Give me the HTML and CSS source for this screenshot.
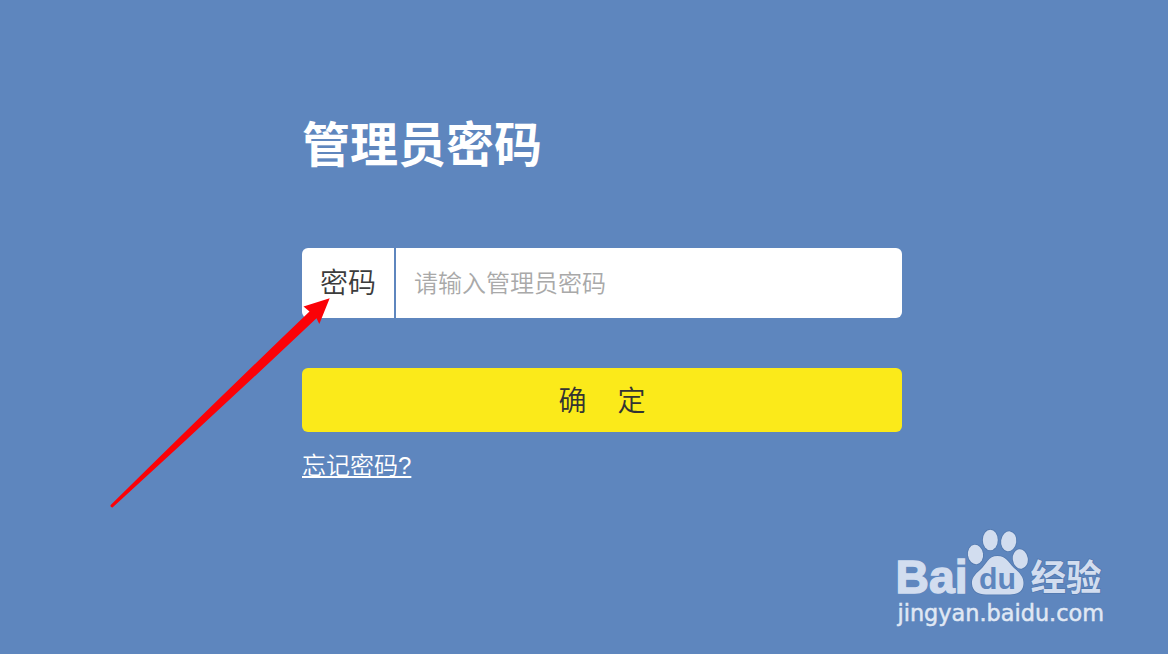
FILE: index.html
```
<!DOCTYPE html>
<html lang="zh-CN">
<head>
<meta charset="utf-8">
<title>管理员密码</title>
<link rel="stylesheet" href="styles.css">
</head>
<body>
<main class="login">
  <h1 class="title">管理员密码</h1>
  <form class="form">
    <div class="field">
      <label class="label" for="pwd">密码</label>
      <input class="input" id="pwd" type="password" placeholder="请输入管理员密码">
    </div>
    <button class="submit" type="button"><span>确</span><span>定</span></button>
    <a class="forgot" href="#">忘记密码<span class="mark-q">?</span></a>
  </form>
</main>
<svg class="arrow" width="240" height="225" viewBox="100 290 240 225" aria-hidden="true">
  <path d="M329.700 298.300 303.500 306.500 309.500 311.500Q214 403 110.700 505Q109.800 507.500 112.500 507.500Q214 415 316.500 318.200L319.300 324Z"/>
</svg>
<svg class="watermark" width="225" height="120" viewBox="0 0 225 120" role="img" aria-label="Baidu 经验">
  <g class="mark">
    <text class="bai" x="5.500" y="73" textLength="72" lengthAdjust="spacingAndGlyphs">Bai</text>
    <ellipse cx="85.5" cy="34.5" rx="7.6" ry="9.8" transform="rotate(-8 85.5 34.5)"/>
    <ellipse cx="100.3" cy="20" rx="7.5" ry="10.3"/>
    <ellipse cx="118.7" cy="21.3" rx="7.6" ry="10" transform="rotate(8 118.7 21.3)"/>
    <ellipse cx="130.3" cy="39" rx="7.5" ry="9.8" transform="rotate(-8 130.3 39)"/>
    <path d="M107.5 36C98 36 97 44 90 50C84 55 81.500 59 82 64C82.500 71 88 74.500 96 74.500H120C128 74.500 133.500 71 133.500 63C133.500 57 130 53 124 48C118 42 116 36 107.500 36Z"/>
    <text class="jingyan" x="140.500" y="70.500" textLength="71" lengthAdjust="spacingAndGlyphs">经验</text>
  </g>
  <text class="du" x="89" y="68.500" textLength="37" lengthAdjust="spacingAndGlyphs">du</text>
  <text class="url" x="7.500" y="101" textLength="206.500" lengthAdjust="spacingAndGlyphs">jingyan.baidu.com</text>
</svg>
</body>
</html>
```
FILE: styles.css
```
* {
  box-sizing: border-box;
}

body {
  margin: 0;
  width: 1168px;
  height: 654px;
  overflow: hidden;
  position: relative;
  background: #5e86be;
  font-family: "Noto Sans CJK SC", sans-serif;
}

.login {
  width: 600px;
  margin-left: 302px;
  padding-top: 105px;
}

.title {
  margin: 0 0 71px;
  height: 72px;
  line-height: 72px;
  font-size: 48px;
  font-weight: 700;
  color: #fff;
}

.form {
  display: flex;
  flex-direction: column;
  align-items: flex-start;
}

.field {
  display: flex;
  gap: 2px;
  width: 600px;
  height: 70px;
  border-radius: 6px;
  overflow: hidden;
}

.label {
  width: 92px;
  background: #fff;
  color: #3c3c3c;
  font-size: 28px;
  font-weight: 350;
  line-height: 66px;
  text-align: center;
}

.input {
  flex: 1;
  min-width: 0;
  padding: 0 18px 4px;
  border: 0;
  background: #fff;
  font: 350 24px "Noto Sans CJK SC", sans-serif;
}

.input::placeholder {
  color: #a9a9a9;
  opacity: 1;
}

.submit {
  display: flex;
  justify-content: center;
  align-items: center;
  gap: 31px;
  width: 600px;
  height: 64px;
  margin-top: 50px;
  padding: 0 0 3px;
  border: 0;
  border-radius: 6px;
  background: #fbea1a;
  color: #333;
  font: 350 28px "Noto Sans CJK SC", sans-serif;
}

.forgot {
  margin-top: 14px;
  color: #fff;
  font-size: 24px;
  font-weight: 350;
  line-height: 36px;
  text-decoration-line: underline;
  text-decoration-thickness: 2px;
  text-decoration-skip-ink: none;
  text-underline-offset: 2px;
}

.mark-q {
  font-family: "Liberation Sans", sans-serif;
}

.arrow {
  position: absolute;
  left: 100px;
  top: 290px;
  fill: #fb0207;
}

.watermark {
  position: absolute;
  left: 890px;
  top: 520px;
}

.mark {
  fill: #d2ddef;
  stroke: #5278ae;
  stroke-width: 1.5px;
  paint-order: stroke;
}

.bai {
  font: 700 46px "Liberation Sans", sans-serif;
  stroke: #d2ddef;
  stroke-width: 1.4px;
}

.jingyan {
  font: 700 36px "Noto Sans CJK SC", sans-serif;
}

.du {
  font: 700 29px "Liberation Sans", sans-serif;
  fill: #5e86be;
}

.url {
  font: 400 23px "DejaVu Sans", sans-serif;
  fill: #e0e8f4;
  stroke: #e0e8f4;
  stroke-width: 0.5px;
}
```
